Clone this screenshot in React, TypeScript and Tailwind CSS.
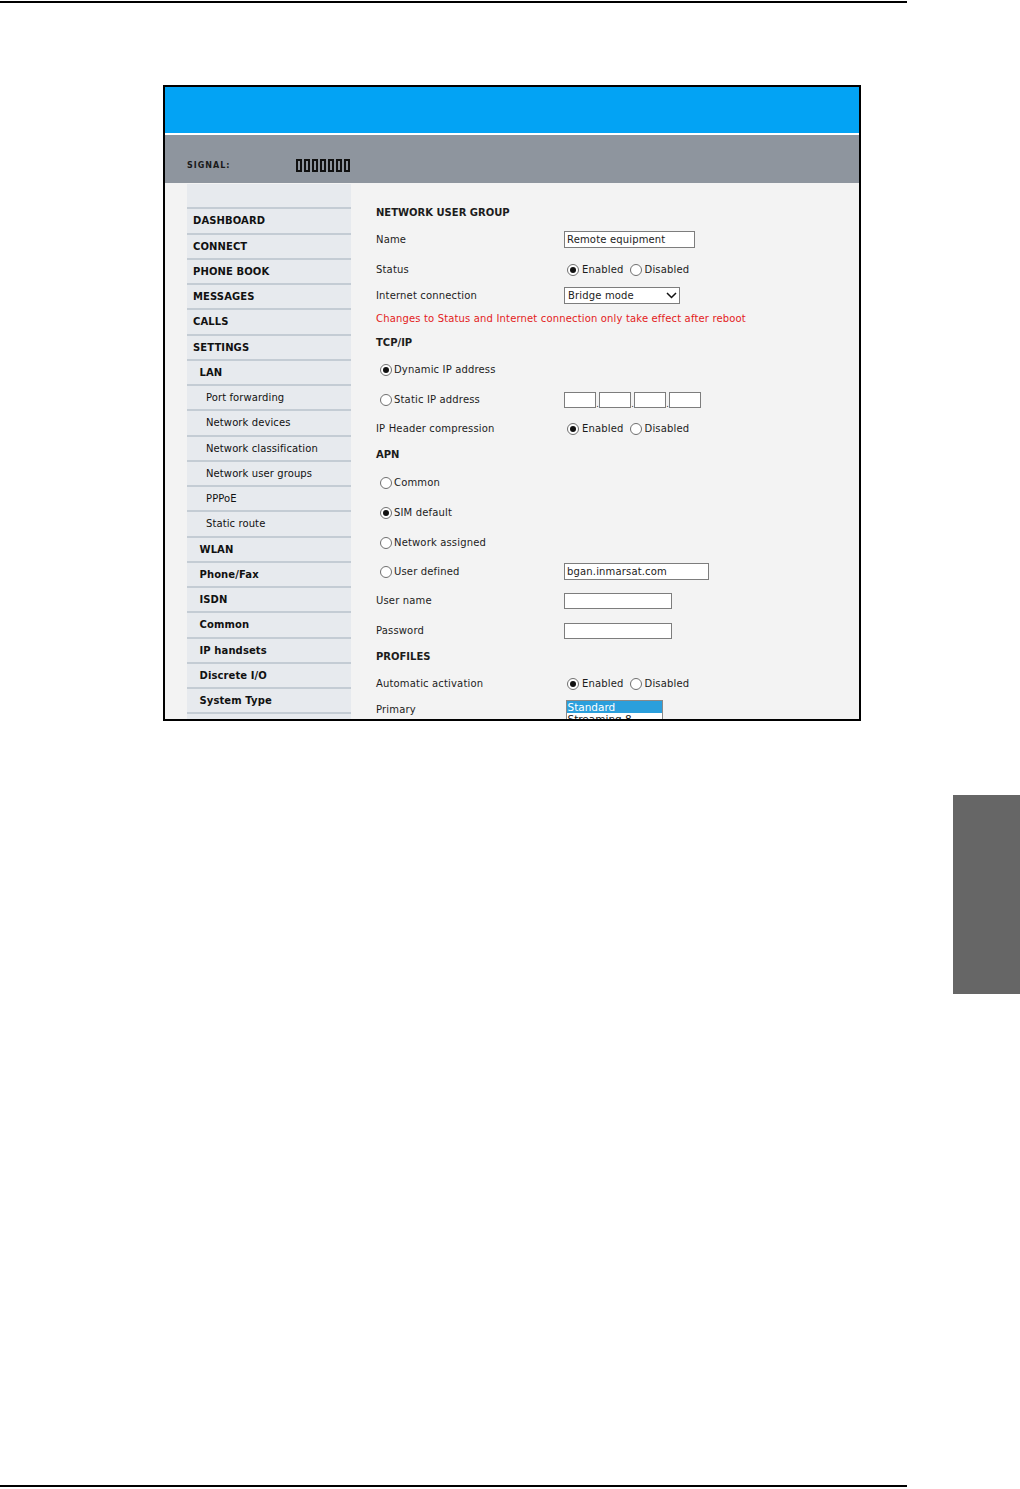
import React from "react";

// Terminal web interface screenshot — Network user group settings page

type NavItem = { label: string; level: 0 | 1 | 2 };

const NAV: NavItem[] = [
  { label: "", level: 0 },
  { label: "DASHBOARD", level: 0 },
  { label: "CONNECT", level: 0 },
  { label: "PHONE BOOK", level: 0 },
  { label: "MESSAGES", level: 0 },
  { label: "CALLS", level: 0 },
  { label: "SETTINGS", level: 0 },
  { label: "LAN", level: 1 },
  { label: "Port forwarding", level: 2 },
  { label: "Network devices", level: 2 },
  { label: "Network classification", level: 2 },
  { label: "Network user groups", level: 2 },
  { label: "PPPoE", level: 2 },
  { label: "Static route", level: 2 },
  { label: "WLAN", level: 1 },
  { label: "Phone/Fax", level: 1 },
  { label: "ISDN", level: 1 },
  { label: "Common", level: 1 },
  { label: "IP handsets", level: 1 },
  { label: "Discrete I/O", level: 1 },
  { label: "System Type", level: 1 },
  { label: "", level: 0 },
];

function Radio({ checked }: { checked?: boolean }) {
  return (
    <span className="w-[12px] h-[12px] rounded-full border border-[#6f6f6f] bg-white flex items-center justify-center shrink-0">
      {checked && <span className="w-[6px] h-[6px] rounded-full bg-[#111]" />}
    </span>
  );
}

function EnableToggle() {
  return (
    <div className="flex items-center ml-[3px]">
      <Radio checked />
      <span className="ml-[3px]">Enabled</span>
      <span className="ml-[6px]">
        <Radio />
      </span>
      <span className="ml-[3px]">Disabled</span>
    </div>
  );
}

function RadioOption({ label, checked }: { label: string; checked?: boolean }) {
  return (
    <div className="flex items-center ml-[4px]">
      <Radio checked={checked} />
      <span className="ml-[2px]">{label}</span>
    </div>
  );
}

function TextBox({ value, className }: { value?: string; className: string }) {
  return (
    <div className={`bg-white border border-[#7d7d7d] flex items-center pl-[2px] text-[10px] leading-none ${className}`}>
      {value}
    </div>
  );
}

function Row({
  className,
  label,
  children,
}: {
  className: string;
  label?: React.ReactNode;
  children?: React.ReactNode;
}) {
  return (
    <div className={`flex items-center h-[20px] ${className}`}>
      <div className="w-[188px] shrink-0">{label}</div>
      {children}
    </div>
  );
}

function Sidebar() {
  return (
    <div className="ml-[22px] mt-[1.5px] w-[164px] shrink-0 bg-[#e7eaee] self-start">
      {NAV.map((item, i) => (
        <div
          key={i}
          className={
            "h-[25.25px] border-b-2 border-[#c4ccd4] flex items-center text-[10px] tracking-[0.1px] text-[#111] " +
            (item.level === 0
              ? "pl-[6px] font-bold"
              : item.level === 1
              ? "pl-[12.5px] font-bold"
              : "pl-[19px]")
          }
        >
          {item.label}
        </div>
      ))}
    </div>
  );
}

function Content() {
  return (
    <div className="flex-1 pl-[25px] pt-[20px] text-[10px] tracking-[0.16px] text-[#1c1c1c]">
      <Row className="" label={<span className="font-bold tracking-normal">NETWORK USER GROUP</span>} />
      <Row className="mt-[7px]" label="Name">
        <TextBox value="Remote equipment" className="w-[131px] h-[17px]" />
      </Row>
      <Row className="mt-[10px]" label="Status">
        <EnableToggle />
      </Row>
      <Row className="mt-[6px]" label="Internet connection">
        <div className="w-[116px] h-[17px] bg-white border border-[#7d7d7d] flex items-center justify-between pl-[3px] pr-[2px]">
          <span>Bridge mode</span>
          <svg width="11" height="7" viewBox="0 0 11 7" fill="none">
            <path d="M1 1l4.5 4.5L10 1" stroke="#111" strokeWidth="1.5" />
          </svg>
        </div>
      </Row>
      <div className="mt-[3px] h-[20px] flex items-center text-[#e31b1b]">
        Changes to Status and Internet connection only take effect after reboot
      </div>
      <Row className="mt-[4px]" label={<span className="font-bold tracking-normal">TCP/IP</span>} />
      <Row className="mt-[7px]" label={<RadioOption label="Dynamic IP address" checked />} />
      <Row className="mt-[10px]" label={<RadioOption label="Static IP address" />}>
        <div className="flex items-end">
          {[0, 1, 2, 3].map((n) => (
            <div key={n} className="flex items-end">
              {n > 0 && <span className="w-[3px] h-[16px] flex items-end justify-center text-[8px] leading-[6px]">.</span>}
              <div className="w-[32px] h-[16px] bg-white border border-[#7d7d7d]" />
            </div>
          ))}
        </div>
      </Row>
      <Row className="mt-[9px]" label="IP Header compression">
        <EnableToggle />
      </Row>
      <Row className="mt-[6px]" label={<span className="font-bold tracking-normal">APN</span>} />
      <Row className="mt-[8px]" label={<RadioOption label="Common" />} />
      <Row className="mt-[10px]" label={<RadioOption label="SIM default" checked />} />
      <Row className="mt-[10px]" label={<RadioOption label="Network assigned" />} />
      <Row className="mt-[9px]" label={<RadioOption label="User defined" />}>
        <TextBox value="bgan.inmarsat.com" className="w-[145px] h-[17px]" />
      </Row>
      <Row className="mt-[9px]" label="User name">
        <TextBox className="w-[108px] h-[16px]" />
      </Row>
      <Row className="mt-[10px]" label="Password">
        <TextBox className="w-[108px] h-[16px]" />
      </Row>
      <Row className="mt-[6px]" label={<span className="font-bold tracking-normal">PROFILES</span>} />
      <Row className="mt-[7px]" label="Automatic activation">
        <EnableToggle />
      </Row>
      <div className="mt-[6px] flex items-start h-[20px]">
        <div className="w-[188px] shrink-0 h-[20px] flex items-center">Primary</div>
        <div className="ml-[1.5px] w-[97px] bg-white border border-[#8a8a8a] text-[10.5px] leading-[12px] tracking-normal">
          <div className="bg-[#2b9fdc] text-white pl-[1px]">Standard</div>
          <div className="pl-[1px]">Streaming 8</div>
        </div>
      </div>
    </div>
  );
}

function SignalBars() {
  return (
    <div className="flex gap-[2px]">
      {[0, 1, 2, 3, 4, 5, 6].map((i) => (
        <span key={i} className="w-[6px] h-[13px] border-2 border-[#111] bg-[#8e959e]" />
      ))}
    </div>
  );
}

export default function App() {
  return (
    <div className="w-[1020px] h-[1489px] bg-white flex flex-col font-['DejaVu_Sans',sans-serif]">
      <div className="mt-[1px] w-[907px] h-[2px] bg-black shrink-0" />

      <div className="mt-[81.5px] ml-[163px] w-[698px] h-[636px] border-2 border-black overflow-hidden flex flex-col bg-[#f3f3f3] shrink-0">
        <div className="h-[46px] bg-[#03a3f4] shrink-0" />
        <div className="h-[2px] bg-white shrink-0" />
        <div className="h-[48px] bg-[#8e959e] shrink-0 pt-[23px] pl-[22px]">
          <div className="h-[16px] flex items-center">
            <span className="w-[109px] text-[8px] font-bold tracking-[1px] text-[#1a1a1a]">SIGNAL:</span>
            <SignalBars />
          </div>
        </div>
        <div className="flex flex-1">
          <Sidebar />
          <Content />
        </div>
      </div>

      <div className="mt-[74.5px] self-end w-[67px] h-[199px] bg-[#666666] shrink-0" />

      <div className="mt-auto mb-[2px] w-[907px] h-[2px] bg-black shrink-0" />
    </div>
  );
}
